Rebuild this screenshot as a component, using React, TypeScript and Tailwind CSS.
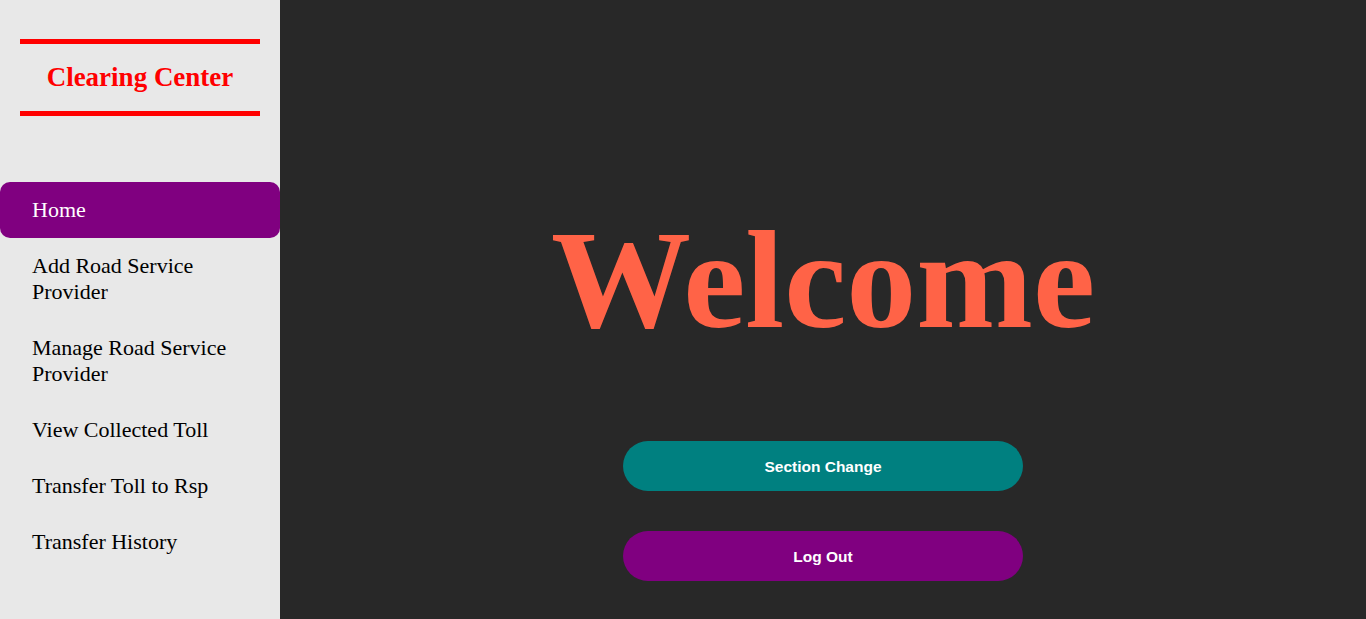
export default function App() {
  const items = [
    "Add Road Service Provider",
    "Manage Road Service Provider",
    "View Collected Toll",
    "Transfer Toll to Rsp",
    "Transfer History",
  ];
  return (
    <div className="flex w-full h-[619px] overflow-hidden" style={{ fontFamily: '"Liberation Serif", "Times New Roman", serif' }}>
      <aside className="w-[280px] shrink-0 bg-[#e8e8e8] flex flex-col">
        <div className="mx-[20px] mt-[39px] border-t-[5px] border-b-[5px] border-[#ff0000] h-[77px] flex items-center justify-center">
          <span className="text-[27px] font-bold text-[#ff0000] leading-none">Clearing Center</span>
        </div>
        <nav className="mt-[66px] flex flex-col">
          <div className="bg-[#800080] text-white rounded-[10px] pl-[32px] pr-4 py-[15px] text-[22px] leading-[26px]">Home</div>
          {items.map((t) => (
            <div key={t} className="text-black pl-[32px] pr-[30px] py-[15px] text-[22px] leading-[26px]">{t}</div>
          ))}
        </nav>
      </aside>
      <main className="flex-1 bg-[#282828] flex flex-col items-center pt-[197px]">
        <h1 className="text-[140px] leading-[165px] font-bold text-[#ff6347]">Welcome</h1>
        <button className="mt-[79px] w-[400px] h-[50px] pt-[1px] rounded-full bg-[#008080] text-white font-bold text-[15.5px]" style={{ fontFamily: '"Liberation Sans", Arial, sans-serif' }}>Section Change</button>
        <button className="mt-[40px] w-[400px] h-[50px] pt-[1px] rounded-full bg-[#800080] text-white font-bold text-[15.5px]" style={{ fontFamily: '"Liberation Sans", Arial, sans-serif' }}>Log Out</button>
      </main>
    </div>
  );
}
